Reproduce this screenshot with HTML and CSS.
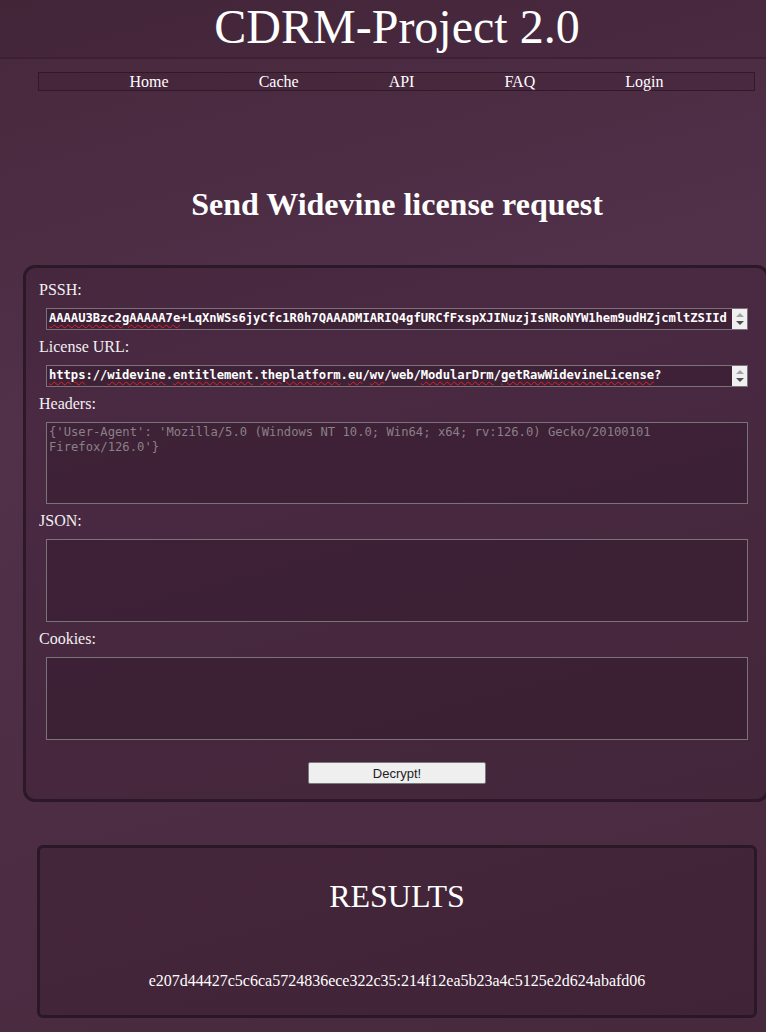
FILE: index.html
```html
<!DOCTYPE html>
<html lang="en">
<head>
<meta charset="utf-8">
<title>CDRM-Project 2.0</title>
<link rel="stylesheet" href="styles.css">
</head>
<body>
<header class="site-header">
  <h1 class="site-title">CDRM-Project 2.0</h1>
</header>
<div class="page">
  <nav class="nav">
    <a href="#">Home</a>
    <a href="#">Cache</a>
    <a href="#">API</a>
    <a href="#">FAQ</a>
    <a href="#">Login</a>
  </nav>

  <h2 class="page-heading">Send Widevine license request</h2>

  <form class="panel">
    <label class="label">PSSH:</label>
    <div class="field field-line">
      <div class="field-text"><span class="sp">AAAAU3Bzc2gAAAAA7e</span>+LqXnWSs6jyCfc1R0h7QAAADMIARIQ4gfURCfFxspXJINuzjIsNRoNYW1hem9udHZjcmltZSIId</div>
      <div class="scrollbar"><span class="arrow-up"></span><span class="arrow-down"></span></div>
    </div>

    <label class="label">License URL:</label>
    <div class="field field-line">
      <div class="field-text"><span class="sp">https</span>://<span class="sp">widevine</span>.<span class="sp">entitlement</span>.<span class="sp">theplatform</span>.<span class="sp">eu</span>/<span class="sp">wv</span>/web/<span class="sp">ModularDrm</span>/<span class="sp">getRawWidevineLicense</span>?</div>
      <div class="scrollbar"><span class="arrow-up"></span><span class="arrow-down"></span></div>
    </div>

    <label class="label">Headers:</label>
    <textarea class="field field-area field-headers" placeholder="{'User-Agent': 'Mozilla/5.0 (Windows NT 10.0; Win64; x64; rv:126.0) Gecko/20100101 Firefox/126.0'}"></textarea>

    <label class="label">JSON:</label>
    <textarea class="field field-area"></textarea>

    <label class="label">Cookies:</label>
    <textarea class="field field-area"></textarea>

    <div class="actions">
      <button type="button" class="btn">Decrypt!</button>
    </div>
  </form>

  <section class="results">
    <h2 class="results-title">RESULTS</h2>
    <p class="results-key">e207d44427c5c6ca5724836ece322c35:214f12ea5b23a4c5125e2d624abafd06</p>
  </section>
</div>
</body>
</html>
```
FILE: styles.css
```css
html {
  overflow: hidden;
  background: linear-gradient(165deg, #47283b 0%, #51304a 35%, #4d2d44 65%, #47293d 100%);
  min-height: 100%;
}

body {
  margin: 0;
  font-family: "Liberation Serif", "Times New Roman", serif;
  color: #ffffff;
}

.site-header {
  background: rgba(20, 5, 15, 0.06);
  border-bottom: 2px solid #3a2133;
  padding-bottom: 4px;
}

.site-title {
  width: 794px;
  margin: 0;
  font-size: 48px;
  font-weight: normal;
  line-height: 53px;
  text-align: center;
}

.page {
  width: 794px;
  padding-bottom: 8px;
}

.nav {
  width: 717px;
  margin: 13px 0 0 38px;
  box-sizing: border-box;
  border: 1px solid #2e1a28;
  background: rgba(20, 5, 15, 0.08);
  display: flex;
  justify-content: center;
  gap: 90px;
  line-height: 17px;
  font-size: 16px;
}

.nav a {
  color: #ffffff;
  text-decoration: none;
}

.page-heading {
  margin: 95px 0 0;
  font-size: 32px;
  font-weight: bold;
  line-height: 37px;
  text-align: center;
}

.panel {
  margin: 42px 0 0 23px;
  width: 746px;
  box-sizing: border-box;
  border: 3px solid #2c1827;
  border-radius: 12px;
  background: rgba(40, 15, 32, 0.18);
  padding: 13px 18px 15px 13px;
  display: flex;
  flex-direction: column;
}

.label {
  font-size: 16px;
  line-height: 18px;
  color: #f4f0f2;
  margin-bottom: 9px;
}

.field {
  margin: 0 0 8px 7px;
  width: 702px;
  box-sizing: border-box;
  border: 1px solid #7c7378;
  background: rgba(35, 15, 30, 0.28);
  font-family: "DejaVu Sans Mono", "Liberation Mono", monospace;
  font-size: 12.2px;
  line-height: 15px;
  color: #ffffff;
}

.field-line {
  height: 22px;
  display: flex;
  overflow: hidden;
}

.field-text {
  flex: 1;
  padding: 2px 0 0 2px;
  overflow: hidden;
  white-space: nowrap;
  font-weight: bold;
  letter-spacing: -0.05px;
}

.sp {
  text-decoration: underline wavy #e0202a;
  text-decoration-thickness: 1px;
  text-underline-offset: 2px;
}

.scrollbar {
  width: 15px;
  flex: none;
  background: #f0f0f0;
  display: flex;
  flex-direction: column;
  justify-content: space-between;
  align-items: center;
  padding: 4px 0;
  box-sizing: border-box;
}

.arrow-up {
  width: 0;
  height: 0;
  border-left: 4px solid transparent;
  border-right: 4px solid transparent;
  border-bottom: 4px solid #a3a3a3;
}

.arrow-down {
  width: 0;
  height: 0;
  border-left: 4px solid transparent;
  border-right: 4px solid transparent;
  border-top: 4px solid #505050;
}

.field-area {
  display: block;
  height: 83px;
  padding: 2px;
  resize: none;
  outline: none;
}

.field-headers {
  height: 82px;
}

.field-area::placeholder {
  color: #8a8088;
  opacity: 1;
}

.actions {
  margin: 14px 0 0 7px;
  width: 702px;
  display: flex;
  justify-content: center;
}

.btn {
  width: 178px;
  height: 22px;
  box-sizing: border-box;
  background: #efefef;
  border: 1px solid #7a7a7a;
  border-radius: 2px;
  font-family: "Liberation Sans", Arial, sans-serif;
  font-size: 13px;
  color: #222222;
  padding: 0;
}

.results {
  margin: 43px 0 0 37px;
  width: 720px;
  box-sizing: border-box;
  border: 3px solid #2b1826;
  border-radius: 6px;
  background: rgba(40, 15, 32, 0.2);
  padding: 30px 0 25px;
  text-align: center;
}

.results-title {
  margin: 0;
  font-size: 32px;
  font-weight: normal;
  line-height: 37px;
}

.results-key {
  margin: 57px 0 0;
  font-size: 16px;
  line-height: 18px;
}
```
